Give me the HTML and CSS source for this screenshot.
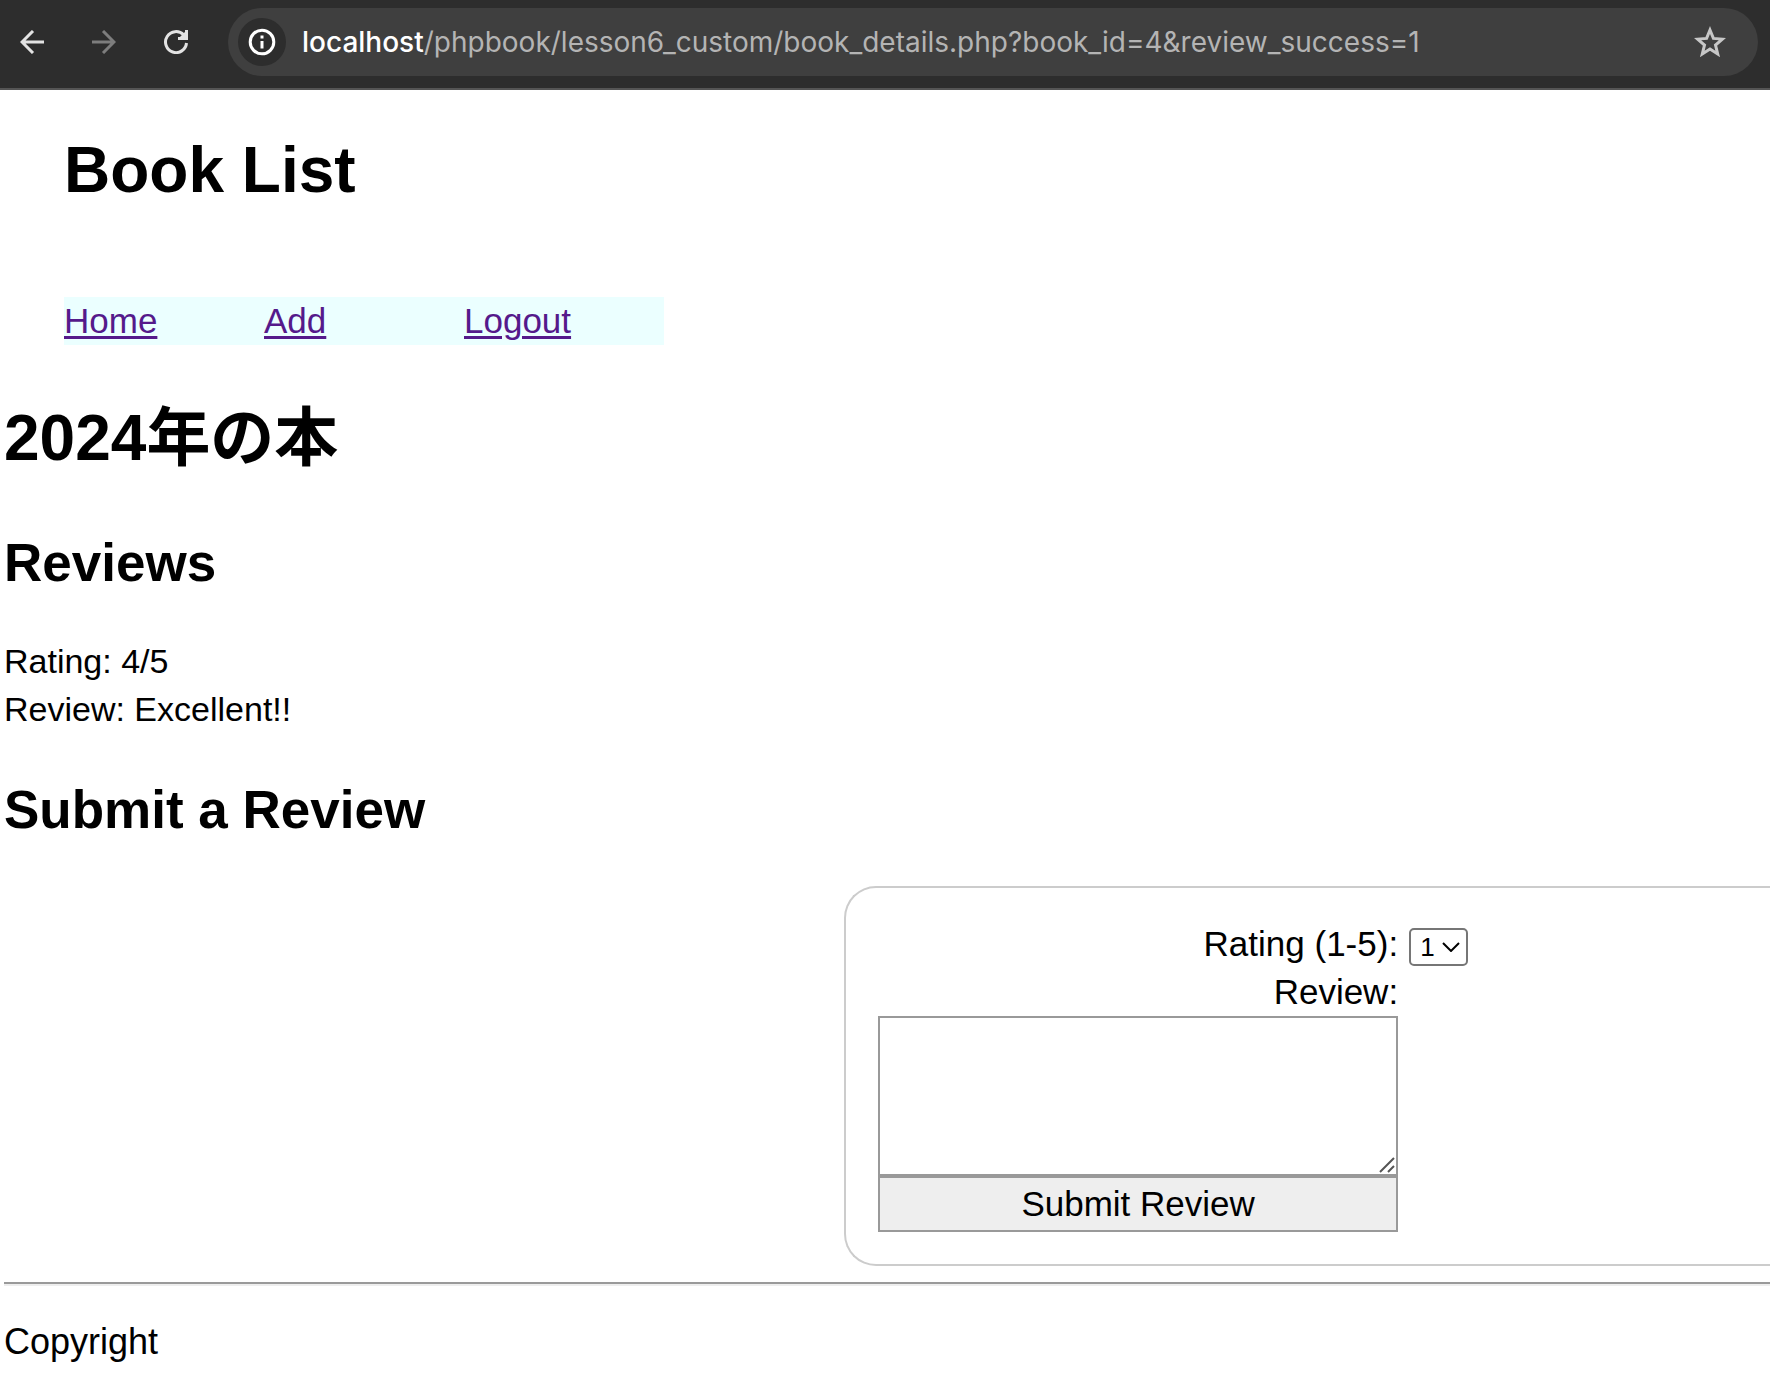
FILE: index.html
```
<!DOCTYPE html>
<html lang="ja">
<head>
<meta charset="utf-8">
<title>Book List</title>
<link rel="stylesheet" href="styles.css">
</head>
<body>
<div class="toolbar">
  <button class="tool" type="button" aria-label="Back">
    <svg width="24" height="24" viewBox="0 0 24 24"><path d="M24 12H2M13 1L2 12l11 11"/></svg>
  </button>
  <button class="tool" type="button" aria-label="Forward" disabled>
    <svg width="24" height="24" viewBox="0 0 24 24"><path d="M0 12h22M11 1l11 11-11 11"/></svg>
  </button>
  <button class="tool" type="button" aria-label="Reload">
    <svg width="24" height="24" viewBox="0 0 24 24"><path d="M22.500 13A10.500 10.500 0 1 1 19.600 4.800l2 2.200M22.500 0v8.500H14M17 8l5-5"/></svg>
  </button>
  <div class="address">
    <button class="info" type="button" aria-label="Site information">
      <svg width="28" height="28" viewBox="0 0 28 28"><circle cx="14" cy="14" r="11.800"/><path d="M14 13v7.500M14 7.500v3"/></svg>
    </button>
    <div class="url"><span class="host">localhost</span>/phpbook/lesson6_custom/book_details.php?book_id=4&amp;review_success=1</div>
    <button class="star" type="button" aria-label="Bookmark">
      <svg width="32" height="32" viewBox="0 0 32 32"><path d="M16 4l3.400 8.400 9 .7-6.900 5.900 2.200 8.900L16 23l-7.700 4.900 2.200-8.900-6.900-5.900 9-.7z"/></svg>
    </button>
  </div>
</div>
<div class="page">
  <header class="masthead">
    <h1>Book List</h1>
    <nav class="menu">
      <a href="#home">Home</a>
      <a href="#add">Add</a>
      <a href="#logout">Logout</a>
    </nav>
  </header>
  <main>
    <h1 class="title">2024年の本</h1>
    <h2>Reviews</h2>
    <p class="review">Rating: 4/5<br>Review: Excellent!!</p>
    <h2>Submit a Review</h2>
    <div class="form-row">
      <form class="review-form">
        <label class="label" for="rating">Rating (1-5):</label>
        <div class="picker">
          <select id="rating">
            <option>1</option><option>2</option><option>3</option><option>4</option><option>5</option>
          </select>
          <svg class="chevron" width="18" height="10" viewBox="0 0 18 10"><path d="M1 1l8 8 8-8"/></svg>
        </div>
        <label class="label review-label" for="comment">Review:</label>
        <div class="comment">
          <textarea id="comment"></textarea>
          <svg class="grip" width="16" height="16" viewBox="0 0 16 16"><path d="M1 15L15 1M9 15l6-6"/></svg>
        </div>
        <button class="submit" type="button">Submit Review</button>
      </form>
    </div>
  </main>
  <hr>
  <footer>Copyright</footer>
</div>
</body>
</html>
```
FILE: styles.css
```
* { box-sizing: border-box; }
body {
  margin: 0;
  background: #fff;
  color: #000;
  font: 35px/48px "Liberation Sans", "Noto Sans CJK JP", sans-serif;
}
svg { display: block; fill: none; stroke: currentColor; }

.toolbar {
  display: flex;
  align-items: center;
  height: 90px;
  padding: 0 12px 4px 8px;
  border-bottom: 2px solid #555;
  background: #2d2d2d;
}
.tool, .info, .star {
  display: flex;
  align-items: center;
  justify-content: center;
  flex: none;
  width: 48px;
  height: 48px;
  padding: 0;
  border: 0;
  background: none;
  color: #e3e3e3;
}
.tool { margin-right: 24px; stroke-width: 3; }
.tool:disabled { color: #7d7d7d; }
.address {
  display: flex;
  align-items: center;
  flex: 1;
  height: 68px;
  margin-left: 4px;
  padding: 0 24px 0 10px;
  border-radius: 34px;
  background: #3f3f3f;
}
.info { border-radius: 50%; background: #2d2d2d; color: #fff; stroke-width: 3; }
.url {
  flex: 1;
  margin-left: 16px;
  color: #b4b4b4;
  font: 400 28px/48px Inter, sans-serif;
  white-space: nowrap;
}
.host { color: #fff; font-weight: 500; }
.star { color: #c7c7c7; stroke-width: 3; }

.page { padding: 32px 0 28px 4px; }
h1, h2, p { margin: 0; }
h1 { font-size: 64px; line-height: 96px; }
h2 { font-size: 53px; line-height: 80px; }
.masthead { padding-left: 60px; }
.menu {
  display: grid;
  grid-template-columns: repeat(3, 200px);
  width: 600px;
  margin: 79px 0 45px;
  background: #ebffff;
}
.menu a {
  color: #551a8b;
  text-decoration-thickness: 3px;
  text-underline-offset: 3px;
}
.title { margin-bottom: 37px; }
.review { margin: 34px 0 37px; font-size: 34px; }

.form-row {
  display: grid;
  grid-template-columns: 49fr 54fr;
  margin-top: 36px;
}
.review-form {
  display: grid;
  grid-column: 2;
  grid-template-columns: 520px auto;
  justify-content: start;
  padding: 32px;
  border: 2px solid #ccc;
  border-right: 0;
  border-radius: 32px 0 0 32px;
}
.label { text-align: right; }
.review-label, .comment, .submit { grid-column: 1; }
.picker {
  position: relative;
  align-self: end;
  width: 59px;
  height: 38px;
  margin: 0 0 2px 11px;
}
select {
  display: block;
  appearance: none;
  width: 100%;
  height: 100%;
  padding: 0 0 0 9px;
  border: 2px solid #767676;
  border-radius: 5px;
  background: #fff;
  color: #000;
  font: 26px "Liberation Sans", sans-serif;
}
.chevron {
  position: absolute;
  right: 8px;
  top: 14px;
  stroke-width: 2;
  pointer-events: none;
}
.comment { position: relative; }
textarea {
  display: block;
  width: 100%;
  height: 160px;
  padding: 4px;
  border: 2px solid #999;
  background: #fff;
  font: inherit;
  resize: none;
}
.grip {
  position: absolute;
  right: 3px;
  bottom: 3px;
  color: #555;
  stroke-width: 2;
  pointer-events: none;
}
.submit {
  height: 56px;
  padding: 0;
  border: 2px solid #999;
  background: #eee;
  color: #000;
  font: inherit;
}
hr {
  margin: 16px 0 32px;
  border: 2px solid #eee;
  border-top-color: #9a9a9a;
  border-width: 2px 0;
}
footer { font-size: 36px; }
```
